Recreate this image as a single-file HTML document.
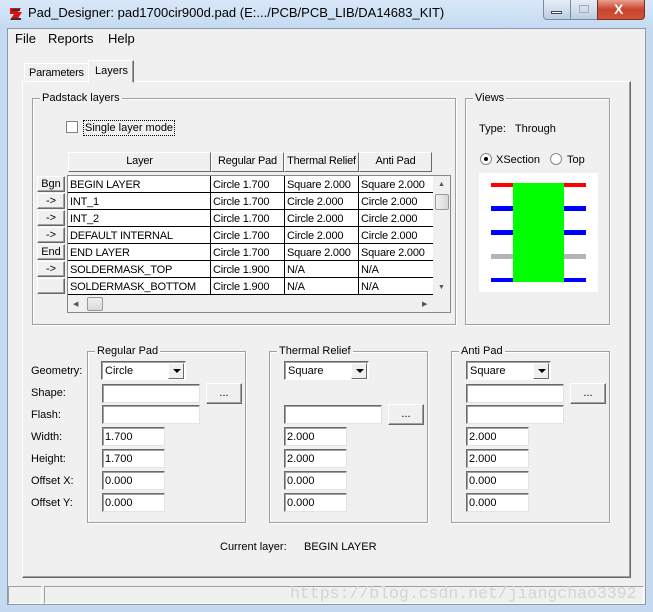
<!DOCTYPE html>
<html><head><meta charset="utf-8"><style>
*{box-sizing:border-box}
body{margin:0;width:653px;height:612px;position:relative;overflow:hidden;font-family:"Liberation Sans",sans-serif;font-size:11px;color:#000;background:#c5daf1}
.a{position:absolute}
.t{position:absolute;white-space:nowrap;line-height:14px}
.grp{position:absolute;border:1px solid #a0a0a0;box-shadow:inset 1px 1px 0 #fff,1px 1px 0 #fff}
.grp>span{position:absolute;top:-8px;left:7px;background:#f0f0f0;padding:0 2px;line-height:14px}
.in{position:absolute;background:#fff;border-top:1px solid #6a6a6a;border-left:1px solid #6a6a6a;border-right:1px solid #e3e3e3;border-bottom:1px solid #e3e3e3;box-shadow:inset 1px 1px 0 #a0a0a0;padding:2px 0 0 2px;line-height:14px}
.btn{position:absolute;background:#f0f0f0;border:1px solid;border-color:#fff #696969 #696969 #fff;box-shadow:inset -1px -1px 0 #a0a0a0;text-align:center;line-height:14px}
.dd{position:absolute;background:#fff;border:1px solid;border-color:#6a6a6a #fff #fff #6a6a6a;box-shadow:inset 1px 1px 0 #a0a0a0;padding:2px 0 0 3px;line-height:14px}
.dd i{position:absolute;right:1px;top:1px;width:16px;height:16px;background:#f0f0f0;border:1px solid;border-color:#fff #696969 #696969 #fff}
.dd i:after{content:"";position:absolute;left:4px;top:5px;border-left:4px solid transparent;border-right:4px solid transparent;border-top:4px solid #000}
.row{position:absolute;left:68px;width:365px;height:17px;border-bottom:1px solid #000}
.row div{position:absolute;top:0;height:17px;border-right:1px solid #000;padding:2px 0 0 2px;line-height:14px;white-space:nowrap;overflow:hidden;letter-spacing:-0.2px}
.hd{position:absolute;top:152px;height:20px;background:#f0f0f0;border:1px solid;border-color:#fff #696969 #696969 #fff;text-align:center;line-height:17px;white-space:nowrap;overflow:hidden;letter-spacing:-0.2px}
.rb{position:absolute;left:37px;width:28px;height:16px;font-size:11px}
</style></head><body>
<div class="a" style="left:0;top:0;width:653px;height:28px;background:linear-gradient(#d9e8f8,#c5daf1)"></div>
<svg class="a" style="left:8px;top:6px" width="16" height="16"><path d="M2 2h11l-3 4h4l-5 8H2l4-6H2z" fill="#d11"/><path d="M3 13h10M4 4h8" stroke="#333" stroke-width="2"/></svg>
<div class="t" style="left:28px;top:6px;font-size:13px;color:#000">Pad_Designer: pad1700cir900d.pad (E:.../PCB/PCB_LIB/DA14683_KIT)</div>
<div class="a" style="left:543px;top:0;width:55px;height:20px;border:1px solid #7b8aa0;border-top:none;border-radius:0 0 0 4px;background:linear-gradient(#e6eef8,#bccde3)"></div>
<div class="a" style="left:570px;top:0;width:1px;height:20px;background:#7b8aa0"></div>
<div class="a" style="left:551px;top:11px;width:11px;height:3px;background:#fff;border:1px solid #445"></div>
<div class="a" style="left:579px;top:5px;width:10px;height:8px;border:1px solid #aab"></div>
<div class="a" style="left:597px;top:0;width:48px;height:20px;border:1px solid #7a3020;border-top:none;border-radius:0 0 4px 0;background:linear-gradient(#e8a090,#c8442c 50%,#d0543a)"></div>
<div class="t" style="left:614px;top:2px;color:#fff;font-weight:bold;font-size:14px">X</div>
<div class="a" style="left:7px;top:28px;width:639px;height:577px;background:#f0f0f0;border:1px solid #8a9bb0"></div>
<div class="t" style="left:15px;top:32px;font-size:13px">File</div>
<div class="t" style="left:48px;top:32px;font-size:13px">Reports</div>
<div class="t" style="left:108px;top:32px;font-size:13px">Help</div>
<div class="a" style="left:22px;top:81px;width:609px;height:497px;border:1px solid;border-color:#fff #696969 #696969 #fff;box-shadow:inset -1px -1px 0 #a0a0a0"></div>
<div class="a" style="left:24px;top:63px;width:65px;height:19px;border:1px solid;border-color:#fff #a0a0a0 transparent #fff"></div>
<div class="t" style="left:29px;top:66px;letter-spacing:-0.2px">Parameters</div>
<div class="a" style="left:88px;top:60px;width:46px;height:23px;background:#f0f0f0;border:1px solid;border-color:#fff #696969 transparent #fff;box-shadow:inset -1px 0 0 #a0a0a0"></div>
<div class="t" style="left:95px;top:64px">Layers</div>
<div class="grp" style="left:32px;top:98px;width:424px;height:227px"><span>Padstack layers</span></div>
<div class="a" style="left:66px;top:121px;width:12px;height:12px;background:#fff;border:1px solid #808080"></div>
<div class="t" style="left:83px;top:120px;border:1px dotted #000;padding:0 1px">Single layer mode</div>
<div class="hd" style="left:68px;width:143px">Layer</div>
<div class="hd" style="left:211px;width:73px">Regular Pad</div>
<div class="hd" style="left:284px;width:75px">Thermal Relief</div>
<div class="hd" style="left:359px;width:73px">Anti Pad</div>
<div class="a" style="left:67px;top:175px;width:384px;height:138px;background:#f0f0f0;border:1px solid #828790"></div>
<div class="a" style="left:68px;top:176px;width:365px;height:119px;background:#fff"></div>
<div class="row" style="top:176px"><div style="left:0;width:143px">BEGIN LAYER</div><div style="left:143px;width:74px">Circle 1.700</div><div style="left:217px;width:74px">Square 2.000</div><div style="left:291px;width:74px;border:none">Square 2.000</div></div>
<div class="row" style="top:193px"><div style="left:0;width:143px">INT_1</div><div style="left:143px;width:74px">Circle 1.700</div><div style="left:217px;width:74px">Circle 2.000</div><div style="left:291px;width:74px;border:none">Circle 2.000</div></div>
<div class="row" style="top:210px"><div style="left:0;width:143px">INT_2</div><div style="left:143px;width:74px">Circle 1.700</div><div style="left:217px;width:74px">Circle 2.000</div><div style="left:291px;width:74px;border:none">Circle 2.000</div></div>
<div class="row" style="top:227px"><div style="left:0;width:143px">DEFAULT INTERNAL</div><div style="left:143px;width:74px">Circle 1.700</div><div style="left:217px;width:74px">Circle 2.000</div><div style="left:291px;width:74px;border:none">Circle 2.000</div></div>
<div class="row" style="top:244px"><div style="left:0;width:143px">END LAYER</div><div style="left:143px;width:74px">Circle 1.700</div><div style="left:217px;width:74px">Square 2.000</div><div style="left:291px;width:74px;border:none">Square 2.000</div></div>
<div class="row" style="top:261px"><div style="left:0;width:143px">SOLDERMASK_TOP</div><div style="left:143px;width:74px">Circle 1.900</div><div style="left:217px;width:74px">N/A</div><div style="left:291px;width:74px;border:none">N/A</div></div>
<div class="row" style="top:278px"><div style="left:0;width:143px">SOLDERMASK_BOTTOM</div><div style="left:143px;width:74px">Circle 1.900</div><div style="left:217px;width:74px">N/A</div><div style="left:291px;width:74px;border:none">N/A</div></div>
<div class="a" style="left:435px;top:194px;width:14px;height:16px;background:linear-gradient(90deg,#f2f2f2,#d8d8d8);border:1px solid #999;border-radius:2px"></div>
<div class="a" style="left:87px;top:297px;width:16px;height:14px;background:linear-gradient(#f2f2f2,#d8d8d8);border:1px solid #999;border-radius:2px"></div>
<div class="t" style="left:438px;top:178px;font-size:7px;color:#555">▲</div>
<div class="t" style="left:438px;top:281px;font-size:7px;color:#555">▼</div>
<div class="t" style="left:73px;top:298px;font-size:7px;color:#555">◀</div>
<div class="t" style="left:422px;top:298px;font-size:7px;color:#555">▶</div>
<div class="btn rb" style="top:176px">Bgn</div>
<div class="btn rb" style="top:193px">-&gt;</div>
<div class="btn rb" style="top:210px">-&gt;</div>
<div class="btn rb" style="top:227px">-&gt;</div>
<div class="btn rb" style="top:244px">End</div>
<div class="btn rb" style="top:261px">-&gt;</div>
<div class="btn rb" style="top:278px"></div>
<div class="grp" style="left:465px;top:98px;width:145px;height:227px"><span>Views</span></div>
<div class="t" style="left:479px;top:122px">Type:&nbsp;&nbsp; Through</div>
<div class="a" style="left:480px;top:153px;width:12px;height:12px;border-radius:50%;background:#fff;border:1px solid #888"></div>
<div class="a" style="left:484px;top:157px;width:4px;height:4px;border-radius:50%;background:#000"></div>
<div class="t" style="left:496px;top:153px">XSection</div>
<div class="a" style="left:550px;top:153px;width:12px;height:12px;border-radius:50%;background:#fff;border:1px solid #888"></div>
<div class="t" style="left:567px;top:153px">Top</div>
<div class="a" style="left:479px;top:173px;width:119px;height:119px;background:#fff"></div>
<div class="a" style="left:491px;top:183px;width:95px;height:4px;background:#f00"></div>
<div class="a" style="left:491px;top:206px;width:95px;height:5px;background:#00f"></div>
<div class="a" style="left:491px;top:230px;width:95px;height:5px;background:#00f"></div>
<div class="a" style="left:491px;top:254px;width:95px;height:5px;background:#b4b4b8"></div>
<div class="a" style="left:491px;top:278px;width:95px;height:4px;background:#00f"></div>
<div class="a" style="left:513px;top:183px;width:51px;height:99px;background:#0f0"></div>
<div class="t" style="left:31px;top:364px">Geometry:</div>
<div class="t" style="left:31px;top:386px">Shape:</div>
<div class="t" style="left:31px;top:408px">Flash:</div>
<div class="t" style="left:31px;top:430px">Width:</div>
<div class="t" style="left:31px;top:452px">Height:</div>
<div class="t" style="left:31px;top:474px">Offset X:</div>
<div class="t" style="left:31px;top:496px">Offset Y:</div>
<div class="grp" style="left:87px;top:351px;width:159px;height:172px"><span>Regular Pad</span></div>
<div class="dd" style="left:101px;top:361px;width:85px;height:19px">Circle<i></i></div>
<div class="in" style="left:102px;top:384px;width:98px;height:19px"></div>
<div class="btn" style="left:206px;top:383px;width:36px;height:21px;line-height:18px">...</div>
<div class="in" style="left:102px;top:405px;width:98px;height:19px"></div>
<div class="in" style="left:102px;top:427px;width:63px;height:19px">1.700</div>
<div class="in" style="left:102px;top:449px;width:63px;height:19px">1.700</div>
<div class="in" style="left:102px;top:471px;width:63px;height:19px">0.000</div>
<div class="in" style="left:102px;top:493px;width:63px;height:19px">0.000</div>
<div class="grp" style="left:269px;top:351px;width:159px;height:172px"><span>Thermal Relief</span></div>
<div class="dd" style="left:284px;top:361px;width:85px;height:19px">Square<i></i></div>
<div class="in" style="left:284px;top:405px;width:98px;height:19px"></div>
<div class="btn" style="left:388px;top:404px;width:36px;height:21px;line-height:18px">...</div>
<div class="in" style="left:284px;top:427px;width:63px;height:19px">2.000</div>
<div class="in" style="left:284px;top:449px;width:63px;height:19px">2.000</div>
<div class="in" style="left:284px;top:471px;width:63px;height:19px">0.000</div>
<div class="in" style="left:284px;top:493px;width:63px;height:19px">0.000</div>
<div class="grp" style="left:451px;top:351px;width:159px;height:172px"><span>Anti Pad</span></div>
<div class="dd" style="left:466px;top:361px;width:85px;height:19px">Square<i></i></div>
<div class="in" style="left:466px;top:384px;width:98px;height:19px"></div>
<div class="btn" style="left:570px;top:383px;width:36px;height:21px;line-height:18px">...</div>
<div class="in" style="left:466px;top:405px;width:98px;height:19px"></div>
<div class="in" style="left:466px;top:427px;width:63px;height:19px">2.000</div>
<div class="in" style="left:466px;top:449px;width:63px;height:19px">2.000</div>
<div class="in" style="left:466px;top:471px;width:63px;height:19px">0.000</div>
<div class="in" style="left:466px;top:493px;width:63px;height:19px">0.000</div>
<div class="t" style="left:220px;top:540px;font-size:11px">Current layer:</div>
<div class="t" style="left:304px;top:540px;font-size:11px">BEGIN LAYER</div>
<div class="a" style="left:8px;top:586px;width:34px;height:18px;border:1px solid;border-color:#a0a0a0 #fff #fff #a0a0a0"></div>
<div class="a" style="left:44px;top:586px;width:600px;height:18px;border:1px solid;border-color:#a0a0a0 #fff #fff #a0a0a0"></div>
<div class="t" style="left:290px;top:584px;font-family:'Liberation Mono',monospace;font-size:16.5px;line-height:20px;color:#d4d4d4">https://blog.csdn.net/jiangchao3392</div>
</body></html>
